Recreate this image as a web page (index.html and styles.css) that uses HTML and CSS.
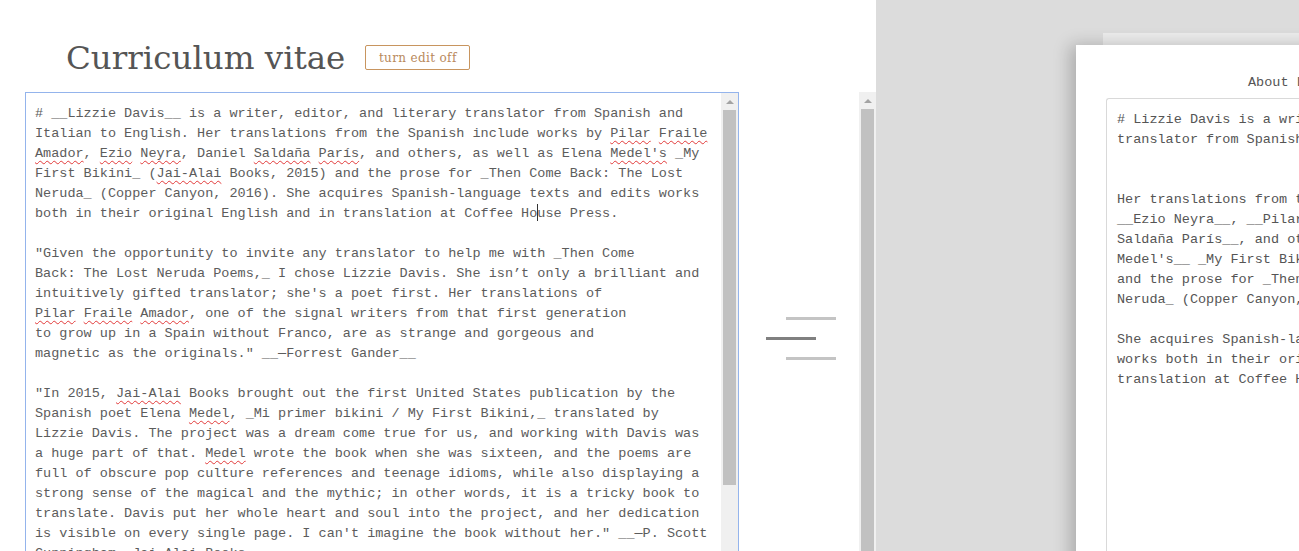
FILE: index.html
```html
<!DOCTYPE html>
<html lang="en">
<head>
<meta charset="utf-8">
<title>Curriculum vitae</title>
<link rel="stylesheet" href="styles.css">
</head>
<body>
<div class="page">
  <section class="left">
    <div class="main">
      <header class="head">
        <h1 class="title">Curriculum vitae</h1>
        <button class="toggle" type="button">turn edit off</button>
      </header>
      <div class="editor">
        <div class="editor-text"># __Lizzie Davis__ is a writer, editor, and literary translator from Spanish and
Italian to English. Her translations from the Spanish include works by <span class="sp">Pilar</span> <span class="sp">Fraile</span>
<span class="sp">Amador</span>, <span class="sp">Ezio</span> <span class="sp">Neyra</span>, Daniel <span class="sp">Saldaña</span> <span class="sp">París</span>, and others, as well as Elena <span class="sp">Medel's</span> _My
First Bikini_ (<span class="sp">Jai-Alai</span> Books, 2015) and the prose for _Then Come Back: The Lost
Neruda_ (Copper Canyon, 2016). She acquires Spanish-language texts and edits works
both in their original English and in translation at Coffee Ho<span class="caret"></span>use Press.

"Given the opportunity to invite any translator to help me with _Then Come
Back: The Lost Neruda Poems,_ I chose Lizzie Davis. She isn’t only a brilliant and
intuitively gifted translator; she's a poet first. Her translations of
<span class="sp">Pilar</span> <span class="sp">Fraile</span> <span class="sp">Amador</span>, one of the signal writers from that first generation
to grow up in a Spain without Franco, are as strange and gorgeous and
magnetic as the originals." __—Forrest Gander__

"In 2015, <span class="sp">Jai-Alai</span> Books brought out the first United States publication by the
Spanish poet Elena <span class="sp">Medel</span>, _Mi primer bikini / My First Bikini,_ translated by
Lizzie Davis. The project was a dream come true for us, and working with Davis was
a huge part of that. <span class="sp">Medel</span> wrote the book when she was sixteen, and the poems are
full of obscure pop culture references and teenage idioms, while also displaying a
strong sense of the magical and the mythic; in other words, it is a tricky book to
translate. Davis put her whole heart and soul into the project, and her dedication
is visible on every single page. I can't imagine the book without her." __—P. Scott
Cunningham, <span class="sp">Jai-Alai</span> Books</div>
        <div class="sb sb-inner">
          <div class="sb-btn"><span class="tri"></span></div>
          <div class="sb-thumb"></div>
        </div>
      </div>
    </div>
    <div class="handle">
      <span class="bar bar-light"></span>
      <span class="bar bar-dark"></span>
      <span class="bar bar-light"></span>
    </div>
    <div class="sb sb-page">
      <div class="sb-btn"><span class="tri"></span></div>
      <div class="sb-thumb"></div>
    </div>
  </section>
  <section class="right">
    <div class="sheet-back">
      <div class="sheet">
        <div class="sheet-title">About Lizzie Davis</div>
        <div class="sheet-box"># Lizzie Davis is a writer, editor, and literary
translator from Spanish and Italian to English.


Her translations from the Spanish include works by
__Ezio Neyra__, __Pilar Fraile Amador__, __Daniel
Saldaña París__, and others, as well as __Elena
Medel's__ _My First Bikini_ (Jai-Alai Books, 2015)
and the prose for _Then Come Back: The Lost
Neruda_ (Copper Canyon, 2016).

She acquires Spanish-language texts and edits
works both in their original English and in
translation at Coffee House Press.</div>
      </div>
    </div>
  </section>
</div>
</body>
</html>
```
FILE: styles.css
```css
html, body {
  margin: 0;
  padding: 0;
  height: 551px;
  overflow: hidden;
  background: #ffffff;
}

.page {
  display: flex;
  height: 551px;
  overflow: hidden;
}

.left {
  width: 876px;
  flex: none;
  display: flex;
  background: #ffffff;
  padding-left: 25px;
  box-sizing: border-box;
}

.main {
  width: 714px;
  flex: none;
  display: flex;
  flex-direction: column;
}

.head {
  height: 92px;
  box-sizing: border-box;
  padding-top: 23px;
  padding-left: 41px;
  display: flex;
  align-items: center;
}

.title {
  margin: 0;
  font-family: "DejaVu Serif", "Liberation Serif", serif;
  font-weight: normal;
  font-size: 32.5px;
  line-height: 38px;
  color: #555555;
}

.toggle {
  margin-left: 20px;
  height: 25px;
  width: 105px;
  padding: 0;
  border: 1px solid #c8955f;
  border-radius: 2px;
  background: #ffffff;
  color: #b8895c;
  font-family: "DejaVu Serif", "Liberation Serif", serif;
  font-size: 12px;
  letter-spacing: 0.35px;
}

.editor {
  flex: 1;
  display: flex;
  border: 1px solid #94b4ec;
  border-bottom: none;
  background: #ffffff;
  min-height: 0;
}

.editor-text {
  flex: 1;
  padding: 11px 0 0 9px;
  font-family: "Liberation Mono", "DejaVu Sans Mono", monospace;
  font-size: 13.5px;
  line-height: 20px;
  color: #5c5c5c;
  white-space: pre;
  overflow: hidden;
}

.sp {
  text-decoration: underline wavy #e23a3a;
  text-decoration-thickness: 1px;
  text-underline-offset: 3px;
}

.caret {
  display: inline-block;
  width: 0;
  height: 17px;
  border-left: 1px solid #333333;
  margin-right: -1px;
  vertical-align: -4px;
}

.sb {
  width: 17px;
  flex: none;
  display: flex;
  flex-direction: column;
  align-items: center;
  background: #f0f0f0;
}

.sb-btn {
  height: 17px;
  width: 100%;
  flex: none;
  display: flex;
  align-items: center;
  justify-content: center;
}

.tri {
  width: 0;
  height: 0;
  border-left: 4px solid transparent;
  border-right: 4px solid transparent;
  border-bottom: 4px solid #a3a3a3;
}

.sb-thumb {
  width: 13px;
  background: #c1c1c1;
}

.sb-inner .sb-thumb {
  height: 375px;
}

.sb-page {
  margin-top: 92px;
}

.sb-page .sb-thumb {
  flex: 1;
}

.handle {
  width: 120px;
  flex: none;
  display: flex;
  flex-direction: column;
  gap: 17px;
  padding-top: 317px;
  box-sizing: border-box;
}

.bar {
  display: block;
  width: 50px;
  height: 3px;
}

.bar-light {
  background: #c4c4c4;
  margin-left: 47px;
}

.bar-dark {
  background: #808080;
  margin-left: 27px;
}

.right {
  flex: 1;
  background: #dcdcdc;
  overflow: hidden;
  padding-left: 227px;
  padding-top: 33px;
  min-width: 0;
}

.sheet-back {
  width: 400px;
  height: 600px;
  background: #ececec;
  padding-top: 12px;
  box-sizing: border-box;
}

.sheet {
  margin-left: -27px;
  width: 420px;
  height: 600px;
  background: #ffffff;
  box-shadow: -6px 0 16px rgba(0, 0, 0, 0.22);
  padding: 28px 0 0 30px;
  box-sizing: border-box;
}

.sheet-title {
  padding-left: 142px;
  font-family: "Liberation Mono", "DejaVu Sans Mono", monospace;
  font-size: 13.5px;
  line-height: 20px;
  color: #555555;
  white-space: pre;
}

.sheet-box {
  margin-top: 5px;
  height: 500px;
  border: 1px solid #d9d9d9;
  border-right: none;
  border-radius: 3px 0 0 0;
  padding: 11px 0 0 10px;
  font-family: "Liberation Mono", "DejaVu Sans Mono", monospace;
  font-size: 13.5px;
  line-height: 20px;
  color: #555555;
  white-space: pre;
  overflow: hidden;
}
```
